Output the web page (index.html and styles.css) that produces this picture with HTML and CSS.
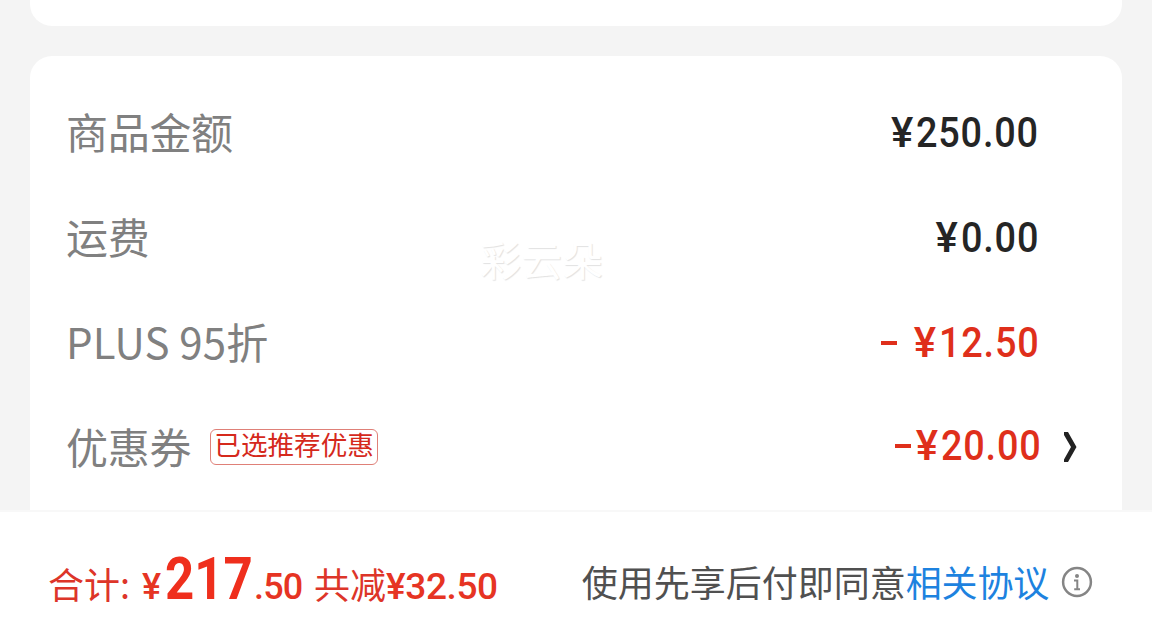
FILE: index.html
```html
<!DOCTYPE html>
<html lang="zh-CN">
<head>
<meta charset="utf-8">
<title>订单结算</title>
<link rel="stylesheet" href="styles.css">
</head>
<body>
<main class="page">
  <section class="card card-prev"></section>
  <section class="card card-summary">
    <div class="row"><span class="label">商品金额</span><span class="price"><span class="yen">¥</span><span class="num num-long">250.00</span></span></div>
    <div class="row"><span class="label">运费</span><span class="price"><span class="yen">¥</span><span class="num num-short">0.00</span></span></div>
    <div class="row"><span class="label"><span class="latin">PLUS 95</span>折</span><span class="price discount"><i class="minus spaced"></i><span class="yen">¥</span><span class="num num-long">12.50</span></span></div>
    <div class="row row-coupon">
      <span class="label">优惠券</span><span class="tag">已选推荐优惠</span>
      <span class="price discount"><i class="minus"></i><span class="yen">¥</span><span class="num num-long">20.00</span></span>
      <svg class="chevron" width="16" height="34" viewBox="0 0 16 34"><path d="M2 2h4L14.500 17 6 32H2v-2.500L9 17 2 5z" fill="#222"/></svg>
    </div>
    <div class="watermark">彩云朵</div>
  </section>
  <footer class="bar">
    <div class="total"><span class="total-label">合计:</span><span class="total-yen">¥</span><span class="total-int">217</span><span class="total-dec">.50</span><span class="saved">共减</span><span class="saved-num">¥32.50</span></div>
    <div class="agree"><span>使用先享后付即同意</span><a class="link">相关协议</a>
      <svg class="info" width="32" height="32" viewBox="0 0 32 32" fill="none" stroke="#858585" stroke-width="2.500"><circle cx="16" cy="16" r="13.900"/><circle cx="16" cy="10" r="2" fill="#858585" stroke="none"/><path d="M13 14.500h3.300v9M13.200 23.300h5.800" stroke-width="2"/></svg>
    </div>
  </footer>
</main>
</body>
</html>
```
FILE: styles.css
```css
* { box-sizing: border-box; }
body { margin: 0; font-family: "Noto Sans CJK SC", sans-serif; }
.page { width: 1152px; height: 621px; background: #f4f4f4; display: flex; flex-direction: column; overflow: hidden; }
.card { margin: 0 30px; background: #fff; }
.card-prev { height: 26px; border-radius: 0 0 22px 22px; margin-bottom: 30px; flex: none; }
.card-summary { position: relative; height: 454px; flex: none; border-radius: 22px 22px 0 0; padding: 24px 83px 0 36px; }
.row { height: 105px; display: flex; align-items: center; line-height: 60px; }
.label { font-size: 42px; color: #808080; letter-spacing: -0.3px; padding-bottom: 3px; }
.latin { letter-spacing: 0.2px; }
.price { margin-left: auto; display: flex; align-items: center; font-family: Roboto, sans-serif; font-weight: 500; font-size: 42px; color: #252525; }
.yen { width: 25px; }
.num { transform: scaleX(0.9); transform-origin: left; letter-spacing: 0.9px; white-space: nowrap; display: block; }
.num-long { margin-right: -13.500px; }
.num-short { margin-right: -8.500px; }
.discount { color: #df2f1b; }
.discount .num-long { margin-right: -11.500px; }
.minus { width: 16px; height: 4px; background: currentColor; margin-right: 5px; }
.spaced { margin-right: 17px; }
.row-coupon { margin-right: -43px; }
.row-coupon .price { padding-bottom: 4px; }
.tag { margin-left: 19px; width: 168px; height: 36px; margin-bottom: 2px; border: 1px solid #df8078; border-radius: 6px; font-size: 26.600px; line-height: 28px; color: #d5291c; text-align: center; white-space: nowrap; }
.chevron { margin-left: 21px; margin-right: 4px; margin-bottom: 2px; flex: none; }
.watermark { position: absolute; left: 450px; top: 172px; font-size: 41px; line-height: 60px; color: #fff; text-shadow: 1px 1px 1px #e2e2e2; }
.bar { flex: 1; background: #fff; border-top: 2px solid #f8f8f8; display: flex; justify-content: space-between; padding: 39px 59px 0 48px; }
.total { display: flex; align-items: baseline; height: 58px; line-height: 56px; color: #dd3529; font-size: 36px; white-space: nowrap; }
.total-label { width: 94px; }
.total-yen, .total-int, .total-dec, .saved-num { font-family: Roboto, sans-serif; font-weight: 500; color: #e63423; }
.total-yen { width: 23px; }
.total-int { font-size: 60px; font-weight: 700; width: 89px; transform: scaleX(0.85); transform-origin: left; color: #ef2f1d; }
.total-dec { width: 60px; letter-spacing: -0.8px; }
.saved-num { font-size: 37px; letter-spacing: -0.4px; }
.agree { display: flex; align-items: center; height: 61px; font-size: 36px; line-height: 60px; color: #505050; white-space: nowrap; }
.agree span, .link { padding-bottom: 1px; }
.link { color: #1d82df; letter-spacing: -0.2px; }
.info { margin-left: 12px; }
```
